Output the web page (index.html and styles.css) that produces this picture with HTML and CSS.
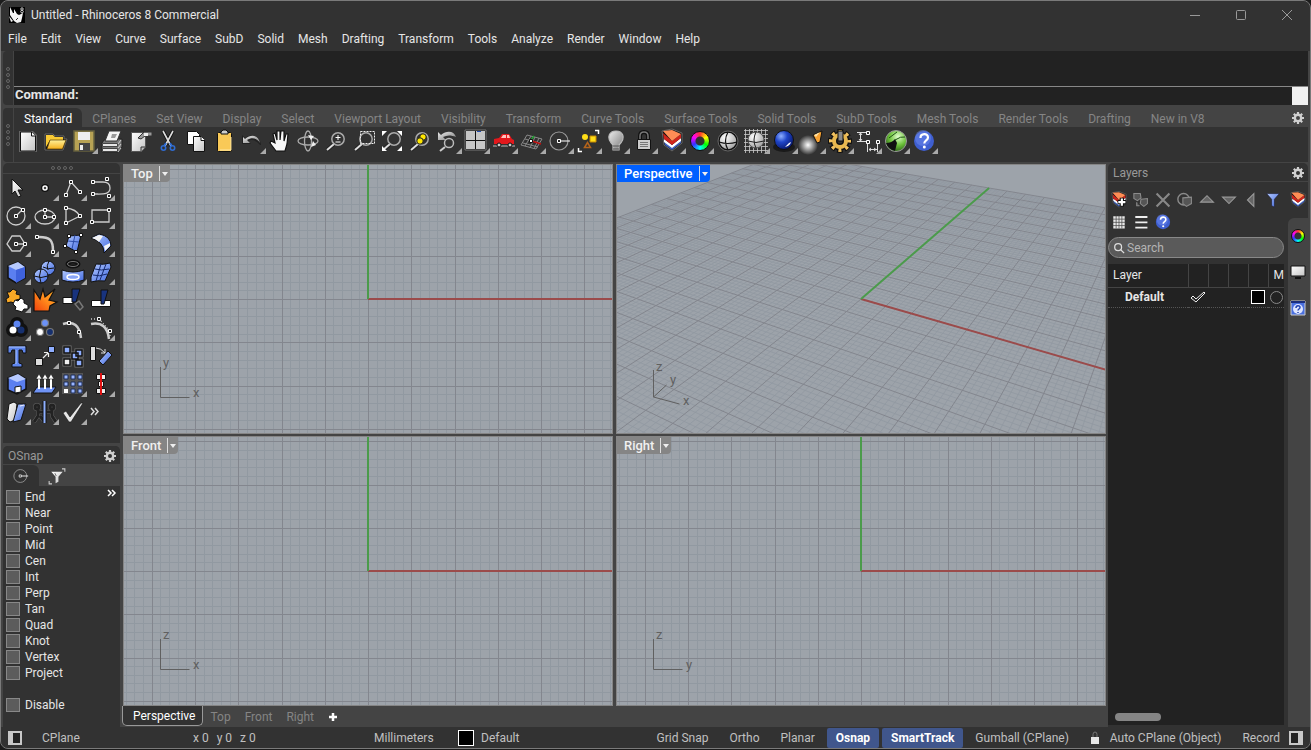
FILE: index.html
```html
<!DOCTYPE html>
<html lang="en">
<head>
  <meta charset="UTF-8">
  <meta name="viewport" content="width=device-width, initial-scale=1.0">
  <title>Untitled - Rhinoceros 8 Commercial</title>
  <link rel="stylesheet" href="styles.css">
</head>
<body>

  <!-- shared gradients and icons -->
  <svg class="defs" aria-hidden="true">
    <defs>
      <linearGradient id="gray" x1="0" y1="0" x2="1" y2="1"><stop offset="0" stop-color="#fff"/><stop offset="1" stop-color="#c4c4c4"/></linearGradient>
      <linearGradient id="steel" x1="0" y1="0" x2="1" y2="1"><stop offset="0" stop-color="#eee"/><stop offset="1" stop-color="#777"/></linearGradient>
      <linearGradient id="blue" x1="0" y1="0" x2="1" y2="1"><stop offset="0" stop-color="#b4caff"/><stop offset="1" stop-color="#4169e0"/></linearGradient>
      <linearGradient id="yellow" x1="0" y1="0" x2="0" y2="1"><stop offset="0" stop-color="#fff29a"/><stop offset="1" stop-color="#f5b01c"/></linearGradient>
      <linearGradient id="fire" x1="1" y1="0" x2="0" y2="1"><stop offset="0" stop-color="#ffb52a"/><stop offset=".5" stop-color="#ff8a1c"/><stop offset="1" stop-color="#f0400c"/></linearGradient>
      <radialGradient id="ball" cx=".35" cy=".3" r=".8"><stop offset="0" stop-color="#fff"/><stop offset="1" stop-color="#9a9a9a"/></radialGradient>
      <radialGradient id="blueball" cx=".35" cy=".3" r=".8"><stop offset="0" stop-color="#8fb0ff"/><stop offset=".4" stop-color="#1f45c8"/><stop offset="1" stop-color="#04115e"/></radialGradient>
      <radialGradient id="greenball" cx=".6" cy=".3" r=".8"><stop offset="0" stop-color="#e4ffd0"/><stop offset=".5" stop-color="#6cc23a"/><stop offset="1" stop-color="#1d4c10"/></radialGradient>
      <radialGradient id="glow"><stop offset="0" stop-color="#fff"/><stop offset="1" stop-color="#fff" stop-opacity="0"/></radialGradient>
    </defs>
    <symbol id="gear" viewBox="0 0 14 14">
      <circle cx="7" cy="7" r="3.2" fill="none" stroke="#d0d0d0" stroke-width="2.4"/>
      <path d="M7 1v2.5M7 10.5V13M1 7h2.5M10.5 7H13M2.8 2.8l1.700 1.700M9.5 9.5l1.700 1.700M11.2 2.8L9.5 4.5M4.5 9.5l-1.700 1.700" stroke="#d0d0d0" stroke-width="2.2"/>
    </symbol>
    <symbol id="layers" viewBox="0 0 28 28">
      <path d="M4 4l10-2 10 4v10l-10 8-8-6z" fill="#111" stroke="#666"/>
      <path d="M6 14l8 6 9-7v3l-9 7-7-5z" fill="#3f62c0"/>
      <path d="M6 12l8 6 9-7v3l-9 7-8-6z" fill="#fff"/>
      <path d="M5 6l9 8 9-7v4l-9 7-8-6z" fill="#d0241c"/>
      <path d="M5 4l9-1 9 4-9 7z" fill="#ff8d55"/>
    </symbol>
    <symbol id="help" viewBox="0 0 28 28">
      <circle cx="14" cy="14" r="10" fill="#3f5fd0"/>
      <circle cx="13" cy="11" r="8" fill="#6f8cf0" opacity=".5"/>
      <path d="M10.5 11c0-5 7.5-5 7.5-.6 0 3-3.7 3-3.7 6" fill="none" stroke="#fff" stroke-width="2.2"/>
      <circle cx="14.3" cy="20" r="1.5" fill="#fff"/>
    </symbol>
    <symbol id="osnap" viewBox="0 0 28 28">
      <circle cx="13" cy="14" r="9" fill="none" stroke="#999" stroke-width="1.2"/>
      <path d="M14 14h10" stroke="#fff" stroke-width="1.2"/>
      <path d="M11.5 12.5h3v3h-3z" fill="#222" stroke="#fff"/>
    </symbol>
    <symbol id="zoom" viewBox="0 0 28 28">
      <path d="M12 17l-7 6" stroke="#222" stroke-width="4"/>
      <path d="M12 17l-7 6" stroke="#ddd" stroke-width="2"/>
      <circle cx="16" cy="12" r="6.2" fill="none" stroke="#aaa" stroke-width="1.5"/>
    </symbol>
  </svg>

  <div class="window">
    <header class="titlebar">
      <svg class="app-icon" viewBox="0 0 16 16">
        <path d="M0 0h16v16H0z" fill="#000"/>
        <path d="M1 0l3 6 1 0 0-4 3 5 2 1 4-2-1 5-1 4-4 1-3-2-4-6zM0 9l4 5-2 1z" fill="#f4f4f4"/>
        <path d="M9 11l-2 2" stroke="#333"/>
        <circle cx="13" cy="2" r="1.2" fill="none" stroke="#ccc"/><circle cx="13" cy="4.6" r="1.3" fill="none" stroke="#ccc"/>
      </svg>
      <h1>Untitled - Rhinoceros 8 Commercial</h1>
      <div class="window-buttons">
        <button aria-label="Minimize"><svg viewBox="0 0 12 12"><path d="M1 6.5h10"/></svg></button>
        <button aria-label="Maximize"><svg viewBox="0 0 12 12"><rect x="1.5" y="1.5" width="9" height="9" rx="1"/></svg></button>
        <button aria-label="Close"><svg viewBox="0 0 12 12"><path d="M1 1l10 10M11 1L1 11"/></svg></button>
      </div>
    </header>

    <nav class="menu">
      <button>File</button><button>Edit</button><button>View</button><button>Curve</button><button>Surface</button><button>SubD</button><button>Solid</button><button>Mesh</button><button>Drafting</button><button>Transform</button><button>Tools</button><button>Analyze</button><button>Render</button><button>Window</button><button>Help</button>
    </nav>

    <section class="command">
      <div class="grip"><i></i><i></i><i></i><i></i></div>
      <div class="command-main">
        <div class="history"></div>
        <div class="prompt">
          <label for="command">Command:</label>
          <input id="command" type="text">
          <span class="prompt-end"></span>
        </div>
      </div>
    </section>

    <section class="toolbar">
      <div class="grip"><i></i><i></i><i></i><i></i></div>
      <div class="toolbar-main">
        <div class="tabs">
          <button class="active">Standard</button><button>CPlanes</button><button>Set View</button><button>Display</button><button>Select</button><button>Viewport Layout</button><button>Visibility</button><button>Transform</button><button>Curve Tools</button><button>Surface Tools</button><button>Solid Tools</button><button>SubD Tools</button><button>Mesh Tools</button><button>Render Tools</button><button>Drafting</button><button>New in V8</button>
          <button class="options" aria-label="Toolbar options"><svg><use href="#gear"/></svg></button>
        </div>
        <div class="tools">
          <button class="tool" aria-label="New"><svg viewBox="0 0 28 28"><path d="M5 4h14l4 4v17H5z" fill="#666"/><path d="M6.5 5h11l4 4v15h-15z" fill="url(#gray)" stroke="#111"/><path d="M17.5 5v4h4" fill="#fff" stroke="#111"/></svg></button>
          <button class="tool" aria-label="Open"><svg viewBox="0 0 28 28"><path d="M3 7h8l2 2h9v3h3l-4 11H3z" fill="#111" stroke="#666"/><path d="M4 8h7l2 2h8v3H8l-4 7z" fill="#f8ca35"/><path d="M8 13h16l-3.5 9H5z" fill="url(#yellow)" stroke="#5b3f00" stroke-width=".7"/></svg></button>
          <button class="tool more" aria-label="Save"><svg viewBox="0 0 28 28"><path d="M4 4h20v20H4z" fill="#b7a254" stroke="#65603e" stroke-width="1.5"/><path d="M8 5h12v8H8z" fill="#eee"/><path d="M9 16h11v8H9z" fill="#444"/><path d="M10 18h3v5h-3z" fill="#eee"/></svg></button>
          <button class="tool" aria-label="Print"><svg viewBox="0 0 28 28"><path d="M6 13l4-1h14v8l-4 5H4v-9z" fill="#777" stroke="#222"/><path d="M11 4h12l-4 10H7z" fill="#f3f3f3" stroke="#333"/><path d="M14 7h5l-2 4h-4z" fill="#999"/><path d="M4.5 16.5h15v3h-15zM4.5 21.5h15v3h-15z" fill="#e6e6e6" stroke="#444"/><path d="M20 17l3-4M20 21l3-4M20 25l3-4" stroke="#ccc"/></svg></button>
          <button class="tool" aria-label="Document properties"><svg viewBox="0 0 28 28"><path d="M5.5 5.5h14V20l-4 4.5h-10z" fill="url(#gray)" stroke="#555"/><path d="M19 20h-4v4" fill="#bbb" stroke="#333"/><path d="M12 11l6-6h8v4h-7l-4 3z" fill="#999" stroke="#333"/><path d="M18 6h4v3h-4z" fill="#eee"/></svg></button>
          <button class="tool" aria-label="Cut"><svg viewBox="0 0 28 28"><path d="M9 4l8 15M19 4l-8 15" stroke="#111" stroke-width="3.5"/><path d="M9 4l8 15M19 4l-8 15" stroke="#ddd" stroke-width="1.6"/><path d="M12 16l-2 3M16 16l2 3" stroke="#2f6bd0" stroke-width="2"/><circle cx="9.5" cy="21" r="2.2" fill="none" stroke="#2f6bd0" stroke-width="1.6"/><circle cx="18.5" cy="21" r="2.2" fill="none" stroke="#2f6bd0" stroke-width="1.6"/></svg></button>
          <button class="tool" aria-label="Copy"><svg viewBox="0 0 28 28"><path d="M5.5 4.5h9l3 3v10h-12z" fill="#fff" stroke="#111"/><path d="M11.5 9.5h8l3 3v12h-11z" fill="url(#gray)" stroke="#111"/><path d="M19 9.5v4h4" fill="#fff" stroke="#111"/></svg></button>
          <button class="tool" aria-label="Paste"><svg viewBox="0 0 28 28"><rect x="7.5" y="5.5" width="14" height="19" rx="1" fill="#f9c957" stroke="#111"/><path d="M21 10v13H10" stroke="#ffe8a6" fill="none"/><path d="M11 7V5l2-2h3l2 2v2z" fill="#ccc" stroke="#111"/></svg></button>
          <button class="tool more" aria-label="Undo"><svg viewBox="0 0 28 28"><path d="M4 8v9h9l-3-3c4-2 8-1 12 4h1C22 9 14 6 7 11z" fill="#222"/><path d="M5 10v6h7l-3-3c5-3 10-2 13 3-1-7-8-10-15-4z" fill="url(#steel)"/></svg></button>
          <button class="tool" aria-label="Pan"><svg viewBox="0 0 28 28"><path d="M10 24l-6-8 1-2 4 2-2-9 2-1 2 7V4h3v9l1-9h3v10l2-7h2l-1 10-2 7z" fill="#f7f7f7" stroke="#111" stroke-width="1.2"/></svg></button>
          <button class="tool" aria-label="Rotate view"><svg viewBox="0 0 28 28"><g fill="none" stroke="#aaa" stroke-width="1.3"><ellipse cx="14" cy="14" rx="10" ry="4"/><ellipse cx="14" cy="14" rx="3.5" ry="10"/></g><path d="M14 8l6 1-3 4zM19 14l-2 6 5-2z" fill="#eee"/></svg></button>
          <button class="tool" aria-label="Zoom dynamic"><svg viewBox="0 0 28 28"><use href="#zoom"/><path d="M16 8v5M13.5 10.5h5M13.5 15h5" stroke="#fff"/></svg></button>
          <button class="tool" aria-label="Zoom window"><svg viewBox="0 0 28 28"><use href="#zoom"/><path d="M10.5 4.5h14v12h-14z" fill="none" stroke="#eee" stroke-dasharray="2 1"/></svg></button>
          <button class="tool" aria-label="Zoom extents"><svg viewBox="0 0 28 28"><use href="#zoom"/><path d="M4 4h5l-5 5zM24 4v5l-5-5zM4 24v-5l5 5zM24 24h-5l5-5z" fill="#fff"/></svg></button>
          <button class="tool" aria-label="Zoom selected"><svg viewBox="0 0 28 28"><use href="#zoom"/><circle cx="17" cy="10" r="3.2" fill="#ffe600" stroke="#222"/><circle cx="14" cy="14" r="3.2" fill="#ffe600" stroke="#222"/></svg></button>
          <button class="tool more" aria-label="Undo view change"><svg viewBox="0 0 28 28"><path d="M4 5v8h8l-3-3c4-2 8-2 13 0C20 4 13 3 7 8z" fill="url(#steel)"/><circle cx="15" cy="16" r="4.5" fill="#323232" stroke="#bbb" stroke-width="1.5"/><path d="M11 20l-5 4" stroke="#ccc" stroke-width="2"/></svg></button>
          <button class="tool more" aria-label="Four viewports"><svg viewBox="0 0 28 28"><path d="M3 3h21v20H3z" fill="#111" stroke="#777"/><path d="M4 4h9v9H4zM14 4h9v9h-9zM4 14h9v8H4zM14 14h9v8h-9z" fill="#c6c6c6"/><path d="M15 4.5h4" stroke="#234bb0"/></svg></button>
          <button class="tool more" aria-label="Set view"><svg viewBox="0 0 28 28"><path d="M3 18h22v2H3z" fill="#777"/><path d="M4 12l5-1 3-4h7l3 5 2 1v4H4z" fill="#e3181c"/><path d="M11 11l2-3h3v3zM17 8h2l1 3h-3z" fill="#ffc3bd"/><circle cx="9" cy="18" r="2" fill="#ccc" stroke="#111"/><circle cx="20" cy="18" r="2" fill="#ccc" stroke="#111"/></svg></button>
          <button class="tool more" aria-label="CPlane"><svg viewBox="0 0 28 28"><path d="M9 8l15 4M7 12l15 4M5 16l15 4M9 8l-6 10 15 4 6-10M13 9l-6 10M17 10l-5 11M21 11l-5 11" fill="none" stroke="#888"/><path d="M13 13l3-4" stroke="#20a030" stroke-width="1.5"/><path d="M14 14l9 3" stroke="#c01010" stroke-width="1.5"/><path d="M11.5 12.5h3v3h-3z" fill="#fff" stroke="#111"/></svg></button>
          <button class="tool more" aria-label="Object snap"><svg><use href="#osnap"/></svg></button>
          <button class="tool more" aria-label="Select"><svg viewBox="0 0 28 28"><path d="M21 3.5h3.5V7M4.5 21v3.5H8" fill="none" stroke="#fff" stroke-width="1.5"/><circle cx="11" cy="10" r="3" fill="#ffde17"/><path d="M16 9h6v6h-6z" fill="#ffde17" stroke="#c78a00"/><path d="M10.5 20.5l3-5 3 5z" fill="none" stroke="#b3631b" stroke-width="1.5"/></svg></button>
          <button class="tool more" aria-label="Hide"><svg viewBox="0 0 28 28"><path d="M11 23v-5c-8-8-3-14 3-14s11 6 3 14v5z" fill="url(#steel)" stroke="#bbb" stroke-width="1.2"/><path d="M11 19h6M11 22h6" stroke="#555"/></svg></button>
          <button class="tool more" aria-label="Lock"><svg viewBox="0 0 28 28"><path d="M10 13V9q0-4 4-4t4 4v4" fill="none" stroke="#111" stroke-width="4"/><path d="M10 13V9q0-4 4-4t4 4v4" fill="none" stroke="#777" stroke-width="1.5"/><path d="M7.5 12.5h13v10h-13z" fill="#ccc" stroke="#111"/><path d="M10 15.5h8M10 17.5h8M10 19.5h8" stroke="#777"/></svg></button>
          <button class="tool more" aria-label="Layers"><svg><use href="#layers"/></svg></button>
          <button class="tool more" aria-label="Color"><span class="wheel"></span></button>
          <button class="tool" aria-label="Shade"><svg viewBox="0 0 28 28"><circle cx="14" cy="14" r="9" fill="url(#ball)" stroke="#111" stroke-width="1.5"/><circle cx="14" cy="14" r="10" fill="none" stroke="#666"/><path d="M14 5q-5 9 0 18M5 15q9 3 18 0" fill="none" stroke="#111" stroke-width="1.2"/></svg></button>
          <button class="tool more" aria-label="Render mesh"><svg viewBox="0 0 28 28"><path d="M3.5 2v24M7.5 2v24M11.5 2v24M15.5 2v24M19.5 2v24M23.5 2v24M2 3.5h24M2 7.5h24M2 11.5h24M2 15.5h24M2 19.5h24M2 23.5h24" stroke="#ccc" stroke-width=".8"/><circle cx="14" cy="13" r="8" fill="url(#ball)" stroke="#555"/><path d="M14 5q-4 8 0 16M6 14q8 3 16 0" fill="none" stroke="#222"/></svg></button>
          <button class="tool more" aria-label="Render"><svg viewBox="0 0 28 28"><ellipse cx="14" cy="20" rx="11" ry="5" fill="#1a1a1a"/><circle cx="14" cy="13" r="9.5" fill="url(#blueball)" stroke="#111"/><path d="M15 20q5-1 6-5l-2 1z" fill="#fff"/></svg></button>
          <button class="tool more" aria-label="Spotlight"><svg viewBox="0 0 28 28"><circle cx="10" cy="18" r="10" fill="url(#glow)"/><path d="M15 8l9-4-2 11-3 1z" fill="#f7a233" stroke="#111"/><path d="M16 8l6-3-4 5z" fill="#ffe3a6"/></svg></button>
          <button class="tool more" aria-label="Options"><svg viewBox="0 0 28 28"><g fill="none"><circle cx="14" cy="14" r="9" stroke="#111" stroke-width="6" stroke-dasharray="5 2.07" stroke-dashoffset="2.5"/><circle cx="14" cy="14" r="6" stroke="#111" stroke-width="7"/><circle cx="14" cy="14" r="9" stroke="#f0c060" stroke-width="4" stroke-dasharray="3 4.07" stroke-dashoffset="1.5"/><circle cx="14" cy="14" r="6" stroke="#e8b850" stroke-width="4"/></g><path d="M12 4h5v10h-5z" fill="#888" stroke="#111"/></svg></button>
          <button class="tool more" aria-label="Dimension"><svg viewBox="0 0 28 28"><path d="M3 5.5h9M3 14.5h9M6.5 6v8M13.5 17v8M23.5 17v8M15 22.5h8M5 8l1.500-2L8 8M5 12l1.500 2L8 12M17 21l-2 1.500 2 1.500M20 21l2 1.500-2 1.500" fill="none" stroke="#ddd"/><path d="M12.5 4.5h3v3h-3zM12.5 13.5h3v3h-3zM22.5 13.5h3v3h-3z" fill="#333" stroke="#fff"/></svg></button>
          <button class="tool more" aria-label="Grasshopper"><svg viewBox="0 0 28 28"><circle cx="14" cy="14" r="10.5" fill="url(#greenball)" stroke="#999"/><path d="M4 16q6 0 9-4l2 4-2 8q-7-2-9-8z" fill="#111"/><path d="M7 11l8-6M13 13q6-4 10-3" fill="none" stroke="#1c5512"/></svg></button>
          <button class="tool more" aria-label="Help"><svg><use href="#help"/></svg></button>
        </div>
      </div>
    </section>

    <main class="workspace">
      <aside class="left">
        <section class="palette">
          <div class="palette-grip"><i></i><i></i><i></i><i></i></div>
          <div class="palette-tools">
            <button class="tool" aria-label="Cancel"><svg viewBox="0 0 28 28"><path d="M9 5v15l3-3 3 6 3-1-3-6h5z" fill="url(#gray)" stroke="#111"/></svg></button>
            <button class="tool more" aria-label="Point"><svg viewBox="0 0 28 28"><circle cx="14" cy="14" r="4" fill="#111"/><circle cx="14" cy="14" r="2" fill="#444" stroke="#fff" stroke-width="1.5"/></svg></button>
            <button class="tool more line" aria-label="Polyline"><svg viewBox="0 0 28 28"><path d="M7 21l5-13 9 10"/><path class="node" d="M5.5 19.5h3v3h-3zM10.5 6.5h3v3h-3zM19.5 16.5h3v3h-3z"/></svg></button>
            <button class="tool more line" aria-label="Curve"><svg viewBox="0 0 28 28"><path d="M7 8h9q7 0 7 6c0 7-8 6-15 6"/><path class="node" d="M4.5 6.5h3v3h-3zM18.5 3.5h3v3h-3zM4.5 18.5h3v3h-3zM20.5 20.5h3v3h-3z"/></svg></button>
            <button class="tool more line" aria-label="Circle"><svg viewBox="0 0 28 28"><circle cx="13" cy="14" r="9"/><path d="M13 14l6-6"/><path class="node" d="M11.5 12.5h3v3h-3zM18.5 6.5h3v3h-3z"/></svg></button>
            <button class="tool more line" aria-label="Ellipse"><svg viewBox="0 0 28 28"><ellipse cx="14" cy="15" rx="10" ry="7"/><path d="M14 8v7h8"/><path class="node" d="M12.5 6.5h3v3h-3zM12.5 13.5h3v3h-3zM21.5 13.5h3v3h-3z"/></svg></button>
            <button class="tool more line" aria-label="Arc"><svg viewBox="0 0 28 28"><path d="M7 21V6q10 1 14 8L7 21"/><path class="node" d="M5.5 4.5h3v3h-3zM19.5 12.5h3v3h-3zM5.5 19.5h3v3h-3z"/></svg></button>
            <button class="tool more line" aria-label="Rectangle"><svg viewBox="0 0 28 28"><path d="M5 8h17v12H5z"/><path class="node" d="M20.5 6.5h3v3h-3zM3.5 18.5h3v3h-3z"/></svg></button>
            <button class="tool more line" aria-label="Polygon"><svg viewBox="0 0 28 28"><path d="M9 6h8l5 8-5 7H9l-5-7z"/><path d="M13 14h8"/><path class="node" d="M11.5 12.5h3v3h-3zM20.5 12.5h3v3h-3z"/></svg></button>
            <button class="tool more line" aria-label="Fillet"><svg viewBox="0 0 28 28"><path d="M8 7c11 0 14 3 14 14" stroke-width="2.5"/><path class="node" d="M4.5 5.5h3v3h-3zM20.5 20.5h3v3h-3z"/></svg></button>
            <button class="tool more" aria-label="Surface from points"><svg viewBox="0 0 28 28"><path d="M10 6l12-1-4 17L7 16z" fill="url(#blue)" stroke="#111"/><path d="M16 5l-3 14M9 11l11 1" stroke="#2a4aa8"/><path d="M8.5 4.5h3v3h-3zM20.5 3.5h3v3h-3zM4.5 14.5h3v3h-3zM15.5 20.5h3v3h-3z" fill="#fff" stroke="#111"/></svg></button>
            <button class="tool more" aria-label="Loft"><svg viewBox="0 0 28 28"><path d="M4 8l8-4q12 2 12 12l-7 7q0-11-13-15z" fill="url(#blue)" stroke="#111"/><path d="M5 8l7-3 4 1-4 6q-3-3-7-4zM17 16l6-3v3l-5 5z" fill="#f5f5f5"/></svg></button>
            <button class="tool more" aria-label="Box"><svg viewBox="0 0 28 28"><path d="M5 8l10-4 7 5v11l-9 5-8-5z" fill="#5b7ff0" stroke="#111" stroke-width="1.5"/><path d="M5 8l10-4 7 5-9 3z" fill="#b6c9ff"/><path d="M13 12l9-3v11l-9 5z" fill="#3f62dc"/></svg></button>
            <button class="tool more" aria-label="Boolean union"><svg viewBox="0 0 28 28"><circle cx="17" cy="10" r="7" fill="url(#blue)" stroke="#111"/><circle cx="10" cy="18" r="7" fill="url(#blue)" stroke="#111"/><path d="M18 3q-3 5-1 9M12 9q5 3 11 1M10 11q-3 7 0 14M3 18q7 3 14 0" fill="none" stroke="#111"/></svg></button>
            <button class="tool more" aria-label="Surface tools"><svg viewBox="0 0 28 28"><ellipse cx="14" cy="6" rx="5.5" ry="2.5" fill="none" stroke="#111" stroke-width="4"/><ellipse cx="14" cy="6" rx="5.500" ry="2.5" fill="none" stroke="#777"/><path d="M3 12q11 4 22 0v10q-11 4-22 0z" fill="url(#blue)" stroke="#111"/><ellipse cx="14" cy="19" rx="6" ry="2.5" fill="#88a4f8" stroke="#fff" stroke-width="1.5"/></svg></button>
            <button class="tool more" aria-label="Patch"><svg viewBox="0 0 28 28"><path d="M9 6q8 1 14-1l1 4-6 14q-8-1-14 1v-5z" fill="url(#blue)" stroke="#111"/><path d="M14 6l-5 17M19 6l-6 16M8 11q6 2 14 0M6 17q6 2 14-1" fill="none" stroke="#14286a"/></svg></button>
            <button class="tool more" aria-label="Explode pieces"><svg viewBox="0 0 28 28"><path d="M4 6l3 0 3-3 4 2-1 3 4 1 0 4-4 1-2 3-3-1-4 1-1-4 3-2z" fill="#f9a825" stroke="#111"/><path d="M12 14l3 1 3-3 3 2v3l4 2v4l-4 0-2 3-3-1-4-1 1-3-3-3z" fill="#fff" stroke="#111"/></svg></button>
            <button class="tool" aria-label="Explode"><svg viewBox="0 0 28 28"><path d="M3 4l6 9 3-10 2 8 10-8-6 11 8 2-7 4-1 5H3z" fill="url(#fire)" stroke="#111" stroke-width="1.2"/></svg></button>
            <button class="tool" aria-label="Trim"><svg viewBox="0 0 28 28"><path d="M4 11.5h10v6H4z" fill="#fff" stroke="#111"/><path d="M13 3h8l-4 13h-4z" fill="#18337e" stroke="#111"/><path d="M16 18l4-3 4 6-3 3z" fill="none" stroke="#777" stroke-width="1.5"/></svg></button>
            <button class="tool" aria-label="Split"><svg viewBox="0 0 28 28"><path d="M4.5 14.5h19v6h-19z" fill="#fff" stroke="#111"/><path d="M14 4h7l-4 14h-3z" fill="#18337e" stroke="#111"/></svg></button>
            <button class="tool more" aria-label="Group"><svg viewBox="0 0 28 28"><g stroke="#111" stroke-width="6" fill="#111"><circle cx="14" cy="10" r="4"/><circle cx="10" cy="16" r="4"/><circle cx="18" cy="16" r="4"/></g><circle cx="14" cy="10" r="3.5" fill="#5c84f0"/><circle cx="10" cy="16" r="3.5" fill="#fff"/><circle cx="18" cy="16" r="3.5" fill="#16306f"/></svg></button>
            <button class="tool" aria-label="Ungroup"><svg viewBox="0 0 28 28"><g stroke="#777" stroke-width="1.2"><circle cx="14" cy="9" r="3.5" fill="#6b92f8"/><circle cx="9" cy="18" r="3.5" fill="#fff"/><circle cx="19" cy="18" r="3.5" fill="#16306f"/></g></svg></button>
            <button class="tool line" aria-label="Join"><svg viewBox="0 0 28 28"><path d="M4 10q16-5 18 14" stroke-width="2.5"/><path class="node" d="M8.5 7.5h3v3h-3zM18.5 16.5h3v3h-3z"/></svg></button>
            <button class="tool more line" aria-label="Edit points"><svg viewBox="0 0 28 28"><path d="M4 10q16-3 18 15" stroke-width="2.5"/><path d="M4 5h7M14 7l7 8M23 18v6" stroke-dasharray="1 2"/><path class="node" d="M10.5 3.5h3v3h-3zM21.5 15.5h3v3h-3z"/></svg></button>
            <button class="tool" aria-label="Text"><svg viewBox="0 0 28 28"><path d="M5 4h18v7h-3l-1-3h-3v13l3 1v3H9v-3l3-1V8H9l-1 3H5z" fill="#5f86ee" stroke="#111"/><path d="M6 5h16M13 8v14" stroke="#a9c2ff"/></svg></button>
            <button class="tool more" aria-label="Move"><svg viewBox="0 0 28 28"><path d="M12 16l5-5M13 10.5h4.500V15" fill="none" stroke="#eee" stroke-width="1.2"/><path d="M4.5 16.5h7v7h-7z" fill="#ddd" stroke="#111"/><path d="M17.5 4.5h6v6h-6z" fill="#8faeff" stroke="#111"/></svg></button>
            <button class="tool" aria-label="Copy objects"><svg viewBox="0 0 28 28"><g fill="#8faeff" stroke="#777" stroke-width="3"><path d="M5 5h6v6H5zM17 8h6v6h-6zM13 11h6v6h-6zM17 18h6v6h-6zM5 17h6v6H5z"/></g><g fill="#8faeff" stroke="#111" stroke-width="1.5"><path d="M5 5h6v6H5zM17 8h6v6h-6zM13 11h6v6h-6zM17 18h6v6h-6z"/><path d="M5 17h6v6H5z" fill="#eee"/></g></svg></button>
            <button class="tool" aria-label="Rotate"><svg viewBox="0 0 28 28"><path d="M3.5 4.5h5v14h-5z" fill="#ddd" stroke="#111"/><path d="M12 19L21 9l4 4-9 10z" fill="url(#blue)" stroke="#111"/><path d="M9 6q5 0 9 5M18 7v4h-4" fill="none" stroke="#ddd"/></svg></button>
            <button class="tool more" aria-label="Solid box"><svg viewBox="0 0 28 28"><path d="M5 8l10-4 8 5v10l-9 5-9-4z" fill="#5b7ff0" stroke="#111" stroke-width="1.5"/><path d="M5 8l10-4 8 5-9 3z" fill="#b6c9ff"/><path d="M12 17l6-1v6l-6 1z" fill="#fff" stroke="#111"/></svg></button>
            <button class="tool more" aria-label="Project"><svg viewBox="0 0 28 28"><path d="M6 17h19l-4 6H2z" fill="#6f93f5" stroke="#111"/><path d="M8 19V7M14 19V7M20 19V7" stroke="#fff" stroke-width="2"/><path d="M5 9l3-5 3 5zM11 9l3-5 3 5zM17 9l3-5 3 5z" fill="#fff" stroke="#111" stroke-width=".5"/></svg></button>
            <button class="tool more" aria-label="Array"><svg viewBox="0 0 28 28"><path d="M3 3h21v21H3z" fill="#555"/><path d="M5 5h4v4H5zM12 5h4v4h-4zM19 5h4v4h-4zM5 12h4v4H5zM12 12h4v4h-4zM19 12h4v4h-4zM12 19h4v4h-4zM19 19h4v4h-4z" fill="#9ab6ff" stroke="#1c2c58"/><path d="M5 19h4v4H5z" fill="#fff"/></svg></button>
            <button class="tool more" aria-label="Align"><svg viewBox="0 0 28 28"><path d="M9.5 4.5h9v5h-9zM11.5 11.5h5v5h-5zM9.5 18.5h9v5h-9z" fill="#eee" stroke="#111"/><path d="M14 3v22" stroke="#e01212" stroke-width="2"/></svg></button>
            <button class="tool more" aria-label="Mirror"><svg viewBox="0 0 28 28"><path d="M6 6l5-2 3 2-2 16-5 2-3-3z" fill="url(#gray)" stroke="#111"/><path d="M15 6l8 0-5 16-8 2z" fill="url(#blue)" stroke="#111"/><path d="M17 8l4-1" stroke="#eef"/></svg></button>
            <button class="tool more" aria-label="Symmetry"><svg viewBox="0 0 28 28"><g fill="none" stroke="#666" stroke-width="4"><circle cx="6" cy="9" r="2"/><circle cx="21" cy="9" r="2"/><path d="M7 12v6l-4 6M7 14h6M9 18l4 5M21 12v6l4 6M21 14h-5"/></g><g fill="none" stroke="#222" stroke-width="3"><circle cx="6" cy="9" r="2"/><circle cx="21" cy="9" r="2"/><path d="M7 12v6l-4 6M7 14h6M9 18l4 5M21 12v6l4 6M21 14h-5"/></g><path d="M13.5 3v22" stroke="#111" stroke-width="4"/><path d="M13.5 3v22" stroke="#8fb0ff" stroke-width="2"/></svg></button>
            <button class="tool more" aria-label="Check"><svg viewBox="0 0 28 28"><path d="M4 15l3-2 4 6L22 5l2 0L12 24h-2z" fill="#e6e6e6" stroke="#111" stroke-width=".6"/></svg></button>
            <button class="tool" aria-label="More tools"><svg viewBox="0 0 28 28"><path d="M4 10l3 3.500L4 17M8 10l3 3.500L8 17" fill="none" stroke="#ddd" stroke-width="1.5"/></svg></button>
          </div>
        </section>

        <section class="osnap">
          <header class="panel-title">
            <h2>OSnap</h2>
            <button class="options" aria-label="OSnap options"><svg><use href="#gear"/></svg></button>
          </header>
          <div class="osnap-tabs">
            <button class="active" aria-label="Snaps"><svg><use href="#osnap"/></svg></button>
            <button aria-label="Filter"><svg viewBox="0 0 28 28"><path d="M6 8h16l-6 7v7l-4 2v-9z" fill="url(#gray)"/><path d="M11 10l2 4" stroke="#444"/><path d="M21 4h4v4M3 21v4h4" fill="none" stroke="#ccc" stroke-width="1.5"/></svg></button>
          </div>
          <div class="osnap-list">
            <label><input type="checkbox">End</label>
            <label><input type="checkbox">Near</label>
            <label><input type="checkbox">Point</label>
            <label><input type="checkbox">Mid</label>
            <label><input type="checkbox">Cen</label>
            <label><input type="checkbox">Int</label>
            <label><input type="checkbox">Perp</label>
            <label><input type="checkbox">Tan</label>
            <label><input type="checkbox">Quad</label>
            <label><input type="checkbox">Knot</label>
            <label><input type="checkbox">Vertex</label>
            <label><input type="checkbox">Project</label>
            <label class="disable"><input type="checkbox">Disable</label>
            <button class="expand" aria-label="More snaps"><svg viewBox="0 0 10 8"><path d="M1 1l3 3-3 3M5 1l3 3-3 3"/></svg></button>
          </div>
        </section>
      </aside>

      <section class="center">
        <div class="viewports">
          <div class="viewport" data-axes="x y"><svg class="grid"></svg><button class="view-name">Top<i></i></button></div>
          <div class="viewport" data-axes="x y z"><svg class="grid"></svg><button class="view-name current">Perspective<i></i></button></div>
          <div class="viewport" data-axes="x z"><svg class="grid"></svg><button class="view-name">Front<i></i></button></div>
          <div class="viewport" data-axes="y z"><svg class="grid"></svg><button class="view-name">Right<i></i></button></div>
        </div>
        <div class="view-tabs">
          <button class="active">Perspective</button><button>Top</button><button>Front</button><button>Right</button>
          <button class="add" aria-label="New viewport"><svg viewBox="0 0 10 10"><path d="M5 1v8M1 5h8" stroke="#fff" stroke-width="2.5"/></svg></button>
        </div>
      </section>

      <aside class="right">
        <header class="panel-title">
          <h2>Layers</h2>
          <button class="options" aria-label="Panel options"><svg><use href="#gear"/></svg></button>
        </header>
        <div class="right-body">
          <section class="layers">
            <div class="layer-tools">
              <button aria-label="New layer"><svg viewBox="0 0 28 28"><use href="#layers" width="28" height="28"/><path d="M18 11v12M12 17h12" stroke="#111" stroke-width="6"/><path d="M18 12v10M13 17h10" stroke="#fff" stroke-width="3"/></svg></button>
              <button aria-label="New sublayer"><svg viewBox="0 0 28 28"><path d="M4 5l9 0 1 6-5 4-5-3zM14 13l9-1v7l-5 4-5-4zM8 17v5h4" fill="#555" stroke="#8a8a8a" stroke-width="1.5"/></svg></button>
              <button aria-label="Delete layer"><svg viewBox="0 0 28 28"><path d="M5 5l18 18M23 5L5 23" stroke="#888" stroke-width="3"/></svg></button>
              <button aria-label="Match layer"><svg viewBox="0 0 28 28"><circle cx="12" cy="13" r="8" fill="none" stroke="#8a8a8a" stroke-width="2"/><path d="M11 11l12-1v9l-7 4-5-4z" fill="#555" stroke="#8a8a8a" stroke-width="1.5"/></svg></button>
              <button aria-label="Move up"><svg viewBox="0 0 28 28"><path d="M5 17l9-9 9 9z" fill="#666" stroke="#999" stroke-width="1.5"/></svg></button>
              <button aria-label="Move down"><svg viewBox="0 0 28 28"><path d="M5 10l9 9 9-9z" fill="#666" stroke="#999" stroke-width="1.5"/></svg></button>
              <button aria-label="Move to parent"><svg viewBox="0 0 28 28"><path d="M18 5l-9 9 9 9z" fill="#666" stroke="#999" stroke-width="1.5"/></svg></button>
              <button aria-label="Filter layers"><svg viewBox="0 0 28 28"><path d="M5 5h18l-7 8v11l-4-2v-9z" fill="url(#blue)" stroke="#223" /></svg></button>
              <button aria-label="Grid view"><svg viewBox="0 0 28 28"><path d="M6 6h16v17H6z" fill="#e8e8e8"/><path d="M5 10h18M5 14.5h18M5 19h18M10 5v18M14 5v18M18 5v18" stroke="#444"/></svg></button>
              <button aria-label="List view"><svg viewBox="0 0 28 28"><path d="M6 7h17M6 14.5h17M6 22h17" stroke="#eee" stroke-width="2.5"/></svg></button>
              <button aria-label="Layer help"><svg><use href="#help"/></svg></button>
            </div>
            <div class="search">
              <svg viewBox="0 0 14 14"><circle cx="6" cy="6" r="4" /><path d="M9 9l4 4"/></svg>
              <input type="search" placeholder="Search" aria-label="Search layers">
            </div>
            <div class="layer-list">
              <table>
                <thead><tr><th class="name">Layer</th><th></th><th></th><th></th><th></th><th class="last">M</th></tr></thead>
                <tbody><tr>
                  <td class="name">Default</td>
                  <td colspan="3"><svg class="tick" viewBox="0 0 16 12"><path d="M1 7l2-2 3 3 8-7 1 1-9 9z"/></svg></td>
                  <td class="cell"><span class="swatch"></span></td>
                  <td class="cell"><span class="material"></span></td>
                </tr></tbody>
              </table>
              <div class="scroll-thumb"></div>
            </div>
          </section>
          <nav class="panel-tabs">
            <button class="active" aria-label="Layers"><svg><use href="#layers"/></svg></button>
            <div class="panel-tabs-rest">
              <button aria-label="Properties"><span class="wheel small"></span></button>
              <button aria-label="Display"><svg viewBox="0 0 16 16"><path d="M1 2h14v10H1z" fill="url(#gray)" stroke="#111"/><path d="M5 14h6" stroke="#111" stroke-width="2"/></svg></button>
              <button aria-label="Help panel"><svg viewBox="0 0 16 16"><path d="M1 1h14v14H1z" fill="#4a70e0" stroke="#ccc"/><path d="M1 2h14" stroke="#1c2f7c" stroke-width="2"/><circle cx="8" cy="9" r="5" fill="#dfe6ff"/><path d="M6 8c0-3 4-3 4-.5 0 1.500-2 1.500-2 3M8 12v1" fill="none" stroke="#2444b0" stroke-width="1.5"/></svg></button>
            </div>
          </nav>
        </div>
      </aside>
    </main>

    <footer class="status">
      <button class="side-toggle" aria-label="Left sidebar"><svg viewBox="0 0 14 14"><path d="M1 1h12v12H1z" fill="#222" stroke="#c8c8c8" stroke-width="2"/><path d="M1 1h4v12H1z" fill="#c8c8c8"/></svg></button>
      <button class="plane">CPlane</button>
      <span class="coords"><span>x 0</span><span>y 0</span><span>z 0</span></span>
      <button class="units">Millimeters</button>
      <button class="layer"><span class="swatch"></span>Default</button>
      <div class="modes">
        <button>Grid Snap</button><button>Ortho</button><button>Planar</button><button class="on">Osnap</button><button class="on">SmartTrack</button><button>Gumball (CPlane)</button>
        <button class="auto"><svg viewBox="0 0 10 14"><path d="M3 6V3.500Q3 1 5 1t2 2.500V6" fill="none" stroke="#777"/><path d="M1 6h8v7H1z" fill="#e8e8e8"/></svg>Auto CPlane (Object)</button>
        <button>Record</button>
      </div>
      <button class="side-toggle" aria-label="Right sidebar"><svg viewBox="0 0 14 14"><path d="M1 1h12v12H1z" fill="#222" stroke="#c8c8c8" stroke-width="2"/><path d="M9 1h4v12H9z" fill="#c8c8c8"/></svg></button>
    </footer>
  </div>

  <script src="script.js"></script>
</body>
</html>
```
FILE: styles.css
```css
:root {
  --panel: #323232;
  --gap: #444;
  --dark: #222;
  --text: #e6e6e6;
  --dim: #999;
}

* {
  box-sizing: border-box;
}

body {
  margin: 0;
  background: #1c1c1c;
  color: var(--text);
  font: 12px/16px Roboto, "Noto Sans", sans-serif;
}

button,
input {
  margin: 0;
  padding: 0;
  border: 0;
  background: none;
  color: inherit;
  font: inherit;
}

h1,
h2 {
  margin: 0;
  font-size: 12px;
  font-weight: normal;
}

svg {
  display: block;
}

.defs {
  position: absolute;
  width: 0;
  height: 0;
}

.window {
  display: flex;
  flex-direction: column;
  height: calc(100vh - 1px);
  min-height: 600px;
  border: 1px solid #7a7a7a;
  border-radius: 8px;
  background: var(--gap);
  overflow: hidden;
}

/* title bar and menu */
.titlebar {
  display: flex;
  align-items: center;
  height: 28px;
  padding-left: 8px;
  background: var(--panel);
}

.app-icon {
  width: 16px;
  height: 16px;
  margin-right: 6px;
}

.window-buttons {
  display: flex;
  margin-left: auto;
}

.window-buttons button {
  width: 46px;
  height: 28px;
}

.window-buttons svg {
  width: 12px;
  height: 12px;
  margin: 0 auto;
  fill: none;
  stroke: #999;
}

.menu {
  display: flex;
  height: 22px;
  background: var(--panel);
}

.menu button {
  padding: 0 7px 3px;
}

/* drag handles */
.grip {
  display: flex;
  flex-direction: column;
  align-items: center;
  justify-content: center;
  gap: 2px;
  width: 11px;
  border-right: 1px solid #444;
  border-radius: 4px 0 0 4px;
  background: var(--panel);
}

.grip i,
.palette-grip i {
  width: 4px;
  height: 4px;
  border: 1px solid #666;
  border-radius: 2px;
}

/* command line */
.command {
  display: flex;
  height: 54px;
  padding: 0 2px;
}

.command-main {
  flex: 1;
  display: flex;
  flex-direction: column;
  background: var(--dark);
}

.history {
  flex: 1;
  border-bottom: 1px solid #888;
}

.prompt {
  display: flex;
  height: 18px;
  padding-left: 1px;
}

.prompt label {
  font-size: 13px;
  font-weight: bold;
}

.prompt input {
  flex: 1;
}

.prompt-end {
  width: 16px;
  background: #f0f0f0;
}

/* main toolbar */
.toolbar {
  display: flex;
  height: 54px;
  margin: 3px 2px 0;
}

.toolbar-main {
  flex: 1;
  min-width: 0;
}

.tabs {
  display: flex;
  height: 19px;
  color: #858585;
}

.tabs button {
  padding: 2px 10px 0;
  line-height: 16px;
  white-space: nowrap;
}

.tabs .active {
  border-radius: 0 6px 0 0;
  background: var(--panel);
  color: #fff;
}

.tabs .options {
  margin-left: auto;
  padding: 0 3px 0 0;
}

.options svg {
  width: 14px;
  height: 14px;
}

.tools {
  display: flex;
  height: 35px;
  background: var(--panel);
}

.tool {
  flex: none;
  position: relative;
  width: 28px;
  height: 28px;
}

.tool svg {
  width: 28px;
  height: 28px;
}

.more::after {
  content: "";
  position: absolute;
  right: 0;
  bottom: 1px;
  border: 3px solid;
  border-color: transparent #aaa #aaa transparent;
}

.line svg {
  fill: none;
  stroke: #ccc;
  stroke-width: 1.3;
}

.line .node {
  fill: #222;
  stroke: #fff;
  stroke-width: 1;
}

.wheel {
  display: block;
  width: 20px;
  height: 20px;
  margin: 0 auto;
  border: 1px solid #111;
  border-radius: 50%;
  background: radial-gradient(circle, #333 4px, transparent 5px), conic-gradient(#f33, #ff0, #0f0, #0ff, #33f, #f0f, #f33);
}

.wheel.small {
  width: 14px;
  height: 14px;
  background: radial-gradient(circle, #333 3px, transparent 4px), conic-gradient(#f33, #ff0, #0f0, #0ff, #33f, #f0f, #f33);
}

/* workspace */
.workspace {
  flex: 1;
  display: flex;
  gap: 2px;
  min-height: 0;
  padding: 1px 2px 0;
}

.left {
  display: flex;
  flex-direction: column;
  gap: 3px;
  width: 117px;
}

.palette {
  height: 280px;
  border-radius: 5px 5px 0 0;
  background: var(--panel);
}

.palette-grip {
  display: flex;
  justify-content: center;
  gap: 2px;
  height: 11px;
  padding-top: 3px;
  border-bottom: 1px solid #444;
}

.palette-tools {
  display: flex;
  flex-wrap: wrap;
  width: 112px;
}

.osnap {
  flex: 1;
  border-radius: 5px 5px 0 0;
  background: var(--panel);
}

.panel-title {
  display: flex;
  align-items: center;
  justify-content: space-between;
  height: 19px;
  padding: 1px 3px 0 5px;
  border-bottom: 1px solid #444;
  border-radius: 5px 5px 0 0;
  background: var(--panel);
  color: var(--dim);
}

.osnap-tabs {
  display: flex;
  height: 21px;
  background: var(--gap);
}

.osnap-tabs button {
  width: 36px;
}

.osnap-tabs .active {
  border-radius: 0 6px 0 0;
  background: var(--panel);
}

.osnap-tabs svg {
  width: 20px;
  height: 20px;
  margin: 0 auto;
}

.osnap-list {
  position: relative;
  padding: 3px;
}

.osnap-list label {
  display: flex;
  align-items: center;
  gap: 5px;
  height: 16px;
  line-height: 18px;
}

.osnap-list .disable {
  margin-top: 16px;
}

.osnap-list input {
  appearance: none;
  width: 14px;
  height: 14px;
  border: 1px solid #888;
  background: #5c5c5c;
}

.expand {
  position: absolute;
  top: 3px;
  right: 3px;
}

.expand svg {
  width: 10px;
  height: 8px;
  fill: none;
  stroke: #fff;
  stroke-width: 1.5;
}

/* viewports */
.center {
  flex: 1;
  display: flex;
  flex-direction: column;
  min-width: 0;
  padding-top: 1px;
}

.viewports {
  flex: 1;
  display: grid;
  grid-template-columns: 1fr 1fr;
  grid-template-rows: 1fr 1fr;
  gap: 2px 3px;
  min-height: 0;
  padding-left: 1px;
}

.viewport {
  position: relative;
  min-width: 0;
  min-height: 0;
  border: 1px solid #858585;
  background: #9da3aa;
  overflow: hidden;
}

.grid {
  position: absolute;
  width: 100%;
  height: 100%;
  fill: none;
}

.grid .minor {
  stroke: #9199a1;
}

.grid .fine {
  opacity: .8;
}

.grid .major {
  stroke: #83868e;
}

.grid .green {
  stroke: #4b9b4b;
  stroke-width: 2;
}

.grid .red {
  stroke: #9b4b4b;
  stroke-width: 2;
}

.grid .tripod {
  stroke: #606060;
}

.grid text {
  fill: #606060;
  font-size: 13px;
}

.flat {
  shape-rendering: crispEdges;
}

.view-name {
  position: absolute;
  top: 0;
  left: 0;
  display: flex;
  height: 17px;
  padding-left: 7px;
  border-radius: 0 0 4px 0;
  background: #858585;
  color: #f0f0f0;
  font-size: 13px;
  font-weight: 500;
  line-height: 17px;
}

.view-name.current {
  background: #0060ff;
  color: #fff;
}

.view-name i {
  align-self: center;
  width: 11px;
  height: 15px;
  margin-left: 6px;
  padding: 6px 0 0 2px;
  border-left: 1px solid #ddd;
}

.view-name i::before {
  content: "";
  display: block;
  width: 0;
  border: 3px solid transparent;
  border-top: 4px solid #eee;
  border-bottom: 0;
}

.view-tabs {
  display: flex;
  height: 21px;
  color: #858585;
}

.view-tabs button {
  height: 20px;
  padding: 1px 7px 0;
}

.view-tabs .active {
  padding: 1px 7px 0 10px;
  border: 1px solid #999;
  border-top: 0;
  border-radius: 0 0 5px 5px;
  background: var(--panel);
  color: #fff;
}

.view-tabs .add svg {
  width: 10px;
  height: 10px;
}

/* layers panel */
.right {
  display: flex;
  flex-direction: column;
  width: 200px;
}

.right-body {
  flex: 1;
  display: flex;
  min-height: 0;
}

.layers {
  flex: 1;
  display: flex;
  flex-direction: column;
  min-width: 0;
  padding: 7px 4px 2px 0;
  background: var(--panel);
}

.layer-tools {
  display: flex;
  flex-wrap: wrap;
}

.layer-tools button {
  width: 22px;
  height: 22px;
}

.layer-tools svg {
  width: 20px;
  height: 20px;
  margin: 0 auto;
}

.search {
  display: flex;
  align-items: center;
  gap: 2px;
  height: 21px;
  margin-top: 4px;
  padding: 0 4px;
  border: 1px solid #888;
  border-radius: 11px;
  background: #5a5a5a;
}

.search svg {
  flex: none;
  width: 12px;
  height: 12px;
  fill: none;
  stroke: #ddd;
  stroke-width: 1.5;
}

.search input {
  flex: 1;
  min-width: 0;
  outline: 0;
}

.search input::placeholder {
  color: #b4b4b4;
}

.layer-list {
  flex: 1;
  position: relative;
  margin-top: 6px;
  background: var(--dark);
  overflow: hidden;
}

table {
  width: 200px;
  table-layout: fixed;
  border-collapse: collapse;
}

th,
td {
  height: 20px;
  padding: 0;
  border-bottom: 1px dotted #555;
  text-align: left;
  font-weight: normal;
}

th {
  width: 20px;
  height: 23px;
  border-right: 1px solid #444;
  border-bottom: 1px solid #444;
}

th.name {
  width: 80px;
  padding-left: 5px;
}

th.last {
  width: auto;
  padding-left: 5px;
}

td.name {
  padding-left: 17px;
  font-weight: bold;
}

.tick {
  width: 16px;
  height: 12px;
  margin-left: 2px;
  fill: #222;
  stroke: #eee;
}

.swatch {
  display: block;
  width: 14px;
  height: 14px;
  border: 1px solid #fff;
  background: #000;
}

.cell .swatch {
  margin: 0 auto;
}

.material {
  display: block;
  width: 13px;
  height: 13px;
  margin-left: 2px;
  border: 1px solid #888;
  border-radius: 50%;
}

.scroll-thumb {
  position: absolute;
  left: 7px;
  bottom: 4px;
  width: 46px;
  height: 8px;
  border-radius: 4px;
  background: #858585;
}

.panel-tabs {
  display: flex;
  flex-direction: column;
  width: 20px;
  background: var(--panel);
}

.panel-tabs .active {
  height: 36px;
}

.panel-tabs svg {
  width: 16px;
  height: 16px;
  margin: 0 auto;
}

.panel-tabs .active svg {
  width: 20px;
  height: 20px;
}

.panel-tabs-rest {
  flex: 1;
  display: flex;
  flex-direction: column;
  border-radius: 6px 0 0 0;
  background: var(--gap);
}

.panel-tabs-rest button {
  height: 36px;
}

/* status bar */
.status {
  display: flex;
  align-items: center;
  height: 21px;
  padding: 0 7px;
  background: var(--panel);
  color: #c0c0c0;
}

.status button {
  text-align: left;
  white-space: nowrap;
}

.side-toggle svg {
  width: 14px;
  height: 14px;
}

.plane {
  width: 151px;
  margin-left: 20px;
}

.coords {
  display: flex;
  gap: 8px;
  width: 181px;
}

.units {
  width: 84px;
}

.layer {
  display: flex;
  gap: 7px;
}

.layer .swatch {
  width: 16px;
  height: 16px;
}

.modes {
  display: flex;
  gap: 3px;
  margin-left: auto;
}

.modes button {
  height: 20px;
  padding: 0 9px;
}

.modes .on {
  border-radius: 2px;
  background: #40568c;
  color: #fff;
  font-weight: bold;
}

.modes .auto {
  display: flex;
  align-items: center;
  gap: 10px;
}

.auto svg {
  width: 10px;
  height: 14px;
}
```
FILE: script.js
```javascript
// one world unit in the parallel views, in pixels
const UNIT = 8.65;
// half size of the construction plane
const EXTENT = 70;

function path(cls, d) {
  return `<path class="${cls}" d="${d}"/>`;
}

function flatGrid(w, h) {
  const cx = Math.round(w / 2);
  const cy = Math.round(h / 2);
  let minor = '';
  let major = '';

  for (let i = -EXTENT; i <= EXTENT; i++) {
    const x = Math.round(cx + i * UNIT) + 0.5;
    const y = Math.round(cy + i * UNIT) + 0.5;
    const d = `M${x} 0V${h}M0 ${y}H${w}`;
    if (i % 5) minor += d;
    else major += d;
  }

  return `<g class="flat">${path('minor', minor)}${path('major', major)}` +
    path('red', `M${cx} ${cy}H${w}`) + path('green', `M${cx} ${cy}V0`) + '</g>';
}

// camera 100 units away from the origin, 30 degrees up, 50mm lens
function perspectiveGrid(w, h) {
  const f = h / 0.48;
  const project = (u, v) => {
    const depth = 100 - 0.433 * u + 0.75 * v;
    const x = w / 2 + f * (0.866 * u + 0.5 * v) / depth;
    const y = h / 2 - f * (0.433 * v - 0.25 * u) / depth;
    return x.toFixed(1) + ' ' + y.toFixed(1);
  };
  const line = (a, b, c, d) => `M${project(a, b)}L${project(c, d)}`;
  let minor = '';
  let major = '';

  for (let i = -EXTENT; i <= EXTENT; i++) {
    const d = line(i, -EXTENT, i, EXTENT) + line(-EXTENT, i, EXTENT, i);
    if (i % 5) minor += d;
    else major += d;
  }

  return path('minor fine', minor) + path('major', major) +
    path('red', line(0, 0, EXTENT, 0)) + path('green', line(0, 0, 0, EXTENT));
}

function tripod(axes, h) {
  const y = h - 36;
  if (axes.length === 3) {
    return path('tripod', `M36.5 ${y - 27}V${y}l13 -12M36.5 ${y}l26 7`) +
      `<text x="39" y="${y - 26}">z</text><text x="53" y="${y - 13}">y</text><text x="66" y="${y + 8}">x</text>`;
  }
  return path('tripod', `M36.5 ${y - 30}V${y + 0.5}h29`) +
    `<text x="39" y="${y - 30}">${axes[1]}</text><text x="69" y="${y}">${axes[0]}</text>`;
}

function draw() {
  document.querySelectorAll('.viewport').forEach(view => {
    const w = view.clientWidth;
    const h = view.clientHeight;
    const axes = view.dataset.axes.split(' ');
    const grid = axes.length === 3 ? perspectiveGrid(w, h) : flatGrid(w, h);
    view.querySelector('.grid').innerHTML = grid + tripod(axes, h);
  });
}

window.addEventListener('resize', draw);
draw();
```
